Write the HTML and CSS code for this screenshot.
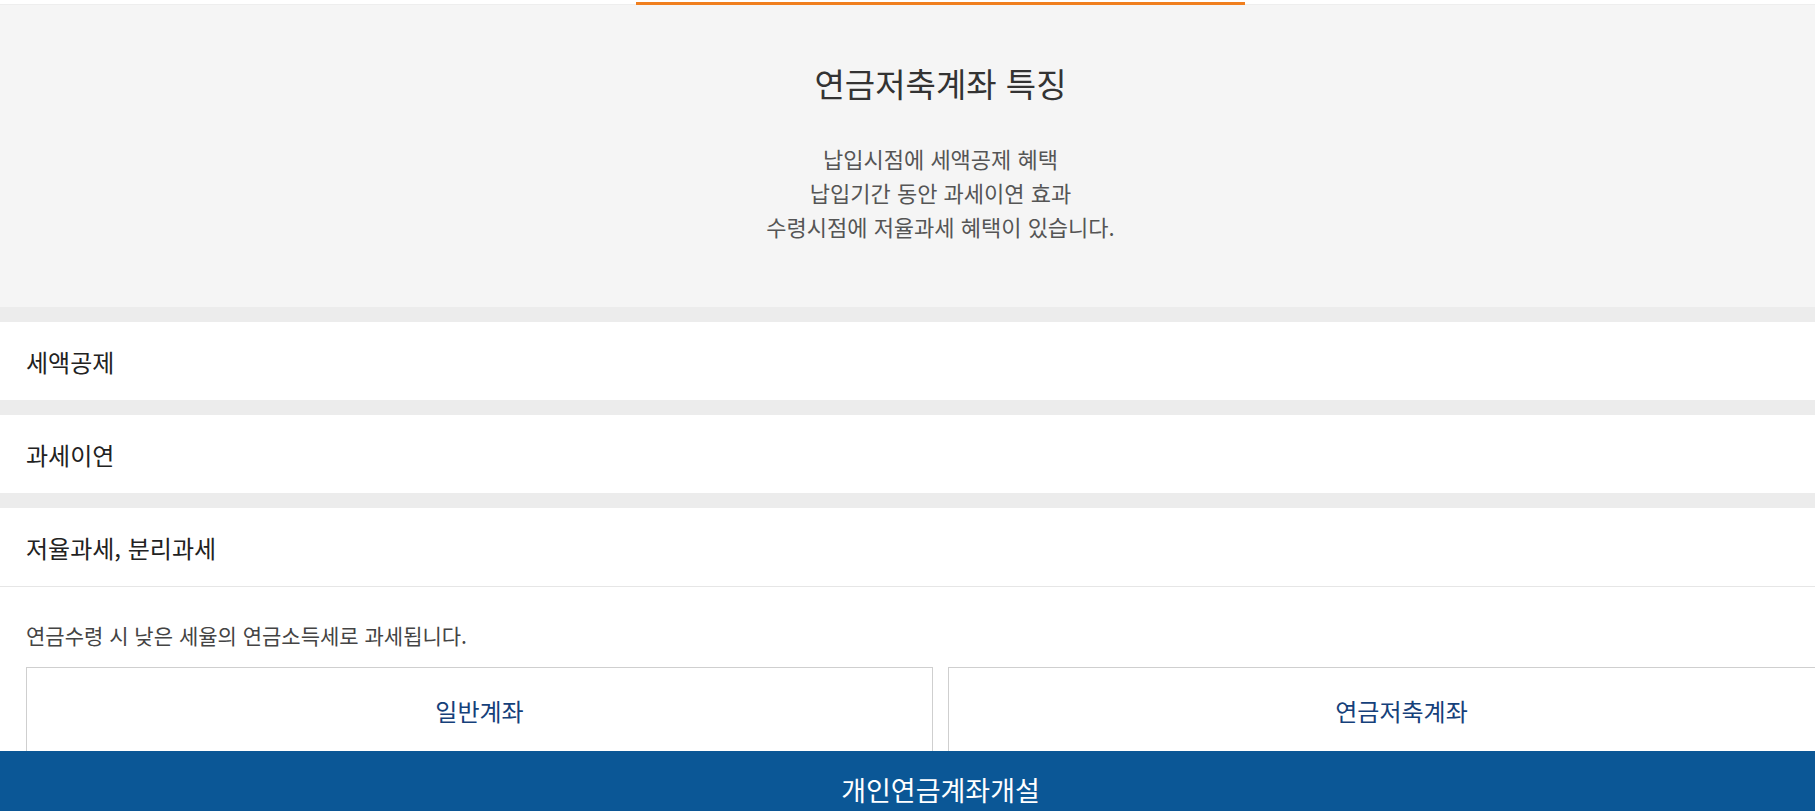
FILE: index.html
```html
<!DOCTYPE html>
<html lang="ko">
<head>
  <meta charset="UTF-8">
  <meta name="viewport" content="width=device-width, initial-scale=1.0">
  <title>연금저축계좌 특징</title>
  <link rel="stylesheet" href="styles.css">
</head>
<body>
  <div class="page">
    <div class="tabs">
      <div class="tab"></div>
      <div class="tab active"></div>
      <div class="tab"></div>
    </div>

    <div class="intro">
      <h2 class="intro-title">연금저축계좌 특징</h2>
      <p class="intro-text">
        납입시점에 세액공제 혜택<br>
        납입기간 동안 과세이연 효과<br>
        수령시점에 저율과세 혜택이 있습니다.
      </p>
    </div>

    <div class="acc">
      <div class="acc-item">
        <div class="acc-head">세액공제</div>
      </div>
      <div class="acc-item">
        <div class="acc-head">과세이연</div>
      </div>
      <div class="acc-item open">
        <div class="acc-head">저율과세, 분리과세</div>
        <div class="acc-body">
          <p class="acc-desc">연금수령 시 낮은 세율의 연금소득세로 과세됩니다.</p>
          <div class="compare">
            <div class="compare-card">
              <h3>일반계좌</h3>
            </div>
            <div class="compare-card">
              <h3>연금저축계좌</h3>
            </div>
          </div>
        </div>
      </div>
    </div>

    <!-- 하단 고정 버튼 -->
    <a class="open-btn" href="#">개인연금계좌개설</a>
  </div>
</body>
</html>
```

FILE: styles.css
```css
html,
body {
  margin: 0;
  padding: 0;
  height: 100%;
  overflow: hidden;
}

body {
  font-family: "Noto Sans CJK KR", "Noto Sans", sans-serif;
  color: #333;
  background: #fff;
}

.page {
  width: 1881px;
  position: relative;
}

/* Tabs (scrolled off, only the indicator shows) */
.tabs {
  display: flex;
  height: 5px;
  padding: 0 26px;
  background: #fff;
  box-sizing: border-box;
  border-bottom: 1px solid #eee;
}

.tab {
  flex: 1;
}

.tab.active {
  margin-top: 2px;
  height: 3px;
  background: #f07f1e;
}

/* Intro */
.intro {
  background: #f5f5f5;
  height: 302px;
  box-sizing: border-box;
  padding-top: 58px;
  text-align: center;
}

.intro-title {
  margin: 0;
  font-size: 33px;
  line-height: 40px;
  font-weight: 400;
  color: #333;
}

.intro-text {
  margin: 38px 0 0;
  font-size: 22px;
  line-height: 34px;
  font-weight: 400;
  color: #555;
}

/* Accordion */
.acc {
  background: #ececec;
  display: flex;
  flex-direction: column;
  gap: 15px;
  padding-top: 15px;
}

.acc-item {
  background: #fff;
}

.acc-head {
  height: 78px;
  display: flex;
  align-items: center;
  padding: 0 26px;
  font-size: 24px;
  font-weight: 400;
  color: #222;
}

.acc-item.open .acc-head {
  border-bottom: 1px solid #e6e6e6;
}

.acc-body {
  padding: 34px 26px 0;
}

.acc-desc {
  margin: 0;
  font-size: 21px;
  line-height: 28px;
  color: #444;
}

.compare {
  display: grid;
  grid-template-columns: 1fr 1fr;
  gap: 15px;
  margin-top: 18px;
}

.compare-card {
  border: 1px solid #cfcfcf;
  height: 160px;
  text-align: center;
}

.compare-card h3 {
  margin: 0;
  padding-top: 28px;
  font-size: 24px;
  line-height: 30px;
  font-weight: 400;
  color: #15407a;
}

/* Bottom button */
.open-btn {
  position: fixed;
  left: 0;
  bottom: 0;
  width: 1881px;
  height: 60px;
  box-sizing: border-box;
  padding-top: 22px;
  background: #0b5796;
  color: #fff;
  font-size: 27px;
  line-height: 34px;
  text-align: center;
  text-decoration: none;
}
```
